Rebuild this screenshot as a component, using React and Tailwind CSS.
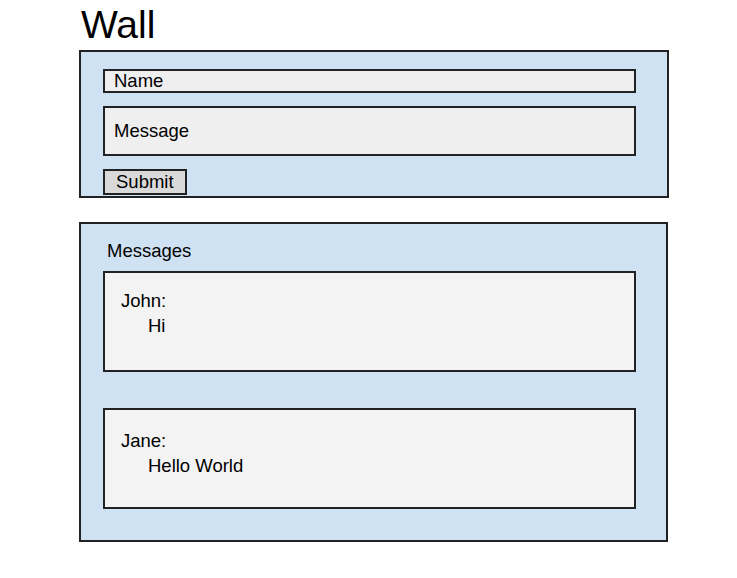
export default function App() {
  const messages = [
    { name: "John:", text: "Hi", pt: "pt-[15px]" },
    { name: "Jane:", text: "Hello World", pt: "pt-[18px]" },
  ];
  return (
    <div className="w-[737px] h-[578px] bg-white text-black font-['Liberation_Sans',Arial,sans-serif]">
      <div className="pl-[79px] w-[669px]">
        <h1 className="h-[50px] pt-[3px] pl-[2px] text-[39px] leading-[44px] font-normal">Wall</h1>
        <div className="h-[148px] border-2 border-[#222] bg-[#cfe2f3] pl-[22px] pr-[31px] pt-[17px] flex flex-col">
          <div className="h-[24px] w-[533px] border-2 border-[#222] bg-[#efefef] pl-[9px] flex items-center text-[18.5px] leading-[20px]">
            Name
          </div>
          <div className="mt-[13px] h-[50px] w-[533px] border-2 border-[#222] bg-[#efefef] pl-[9px] flex items-center text-[18.5px] leading-[20px]">
            Message
          </div>
          <div className="mt-[13px] h-[26px] w-[84px] border-2 border-[#222] bg-[#d9d9d9] pl-[11px] flex items-center text-[18.5px] leading-[20px]">
            Submit
          </div>
        </div>
        <div className="mt-[24px] w-[589px] h-[320px] border-2 border-[#222] bg-[#cfe2f3] pl-[22px] pt-[14px]">
          <div className="pl-[4px] text-[18.5px] leading-[25px]">Messages</div>
          <div className="mt-[8px] flex flex-col gap-[36px]">
            {messages.map((m) => (
              <div
                key={m.name}
                className={`h-[101px] w-[533px] border-2 border-[#222] bg-[#f3f3f3] pl-[16px] ${m.pt} text-[18.5px] leading-[25px]`}
              >
                <div>{m.name}</div>
                <div className="pl-[27px]">{m.text}</div>
              </div>
            ))}
          </div>
        </div>
      </div>
    </div>
  );
}
